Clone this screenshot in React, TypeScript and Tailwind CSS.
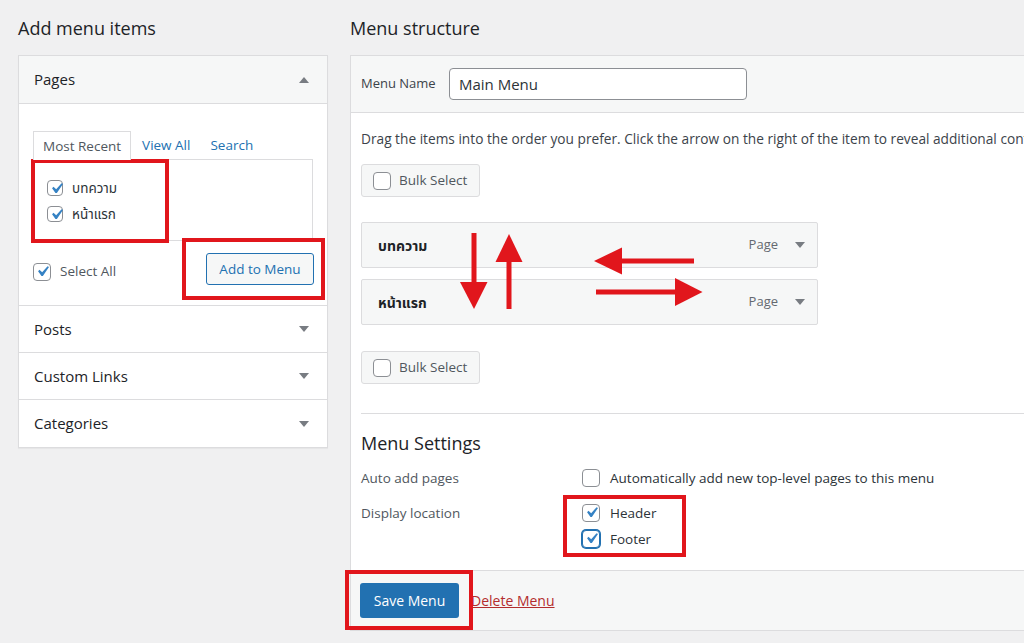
import type { ReactNode } from 'react';

const FONT = "font-['Open_Sans','Noto_Sans_Thai','Noto_Sans',sans-serif]";

function Check({ checked, focus, size = 'sm' }: { checked?: boolean; focus?: boolean; size?: 'sm' | 'lg' }) {
  return (
    <span
      className={`relative flex shrink-0 items-center justify-center rounded-[4px] border bg-white ${
        size === 'lg' ? 'h-[18px] w-[18px]' : 'h-4 w-4'
      } ${focus ? 'border-[#2271b1] ring-1 ring-[#2271b1]' : 'border-[#8c8f94]'}`}
    >
      {checked && (
        <svg viewBox="0 0 20 20" className="absolute -top-[3px] left-[-2px] h-[21px] w-[21px]">
          <path d="M14.83 4.89l1.34.94-5.81 8.38H9.02L5.78 9.67l1.34-1.25 2.57 2.4z" fill="#3582c4" />
        </svg>
      )}
    </span>
  );
}

function Caret({ up }: { up?: boolean }) {
  return (
    <svg viewBox="0 0 10 6" className="h-[6px] w-[10px]">
      <polygon points={up ? '5,0 10,6 0,6' : '0,0 10,0 5,6'} fill="#787c82" />
    </svg>
  );
}

function AccordionRow({ title, last }: { title: string; last?: boolean }) {
  return (
    <div className={`flex h-[47px] items-center justify-between pl-[15px] pr-[18px] ${last ? '' : 'border-b border-[#dcdcde]'}`}>
      <span className="text-[15px] font-medium text-[#1d2327]">{title}</span>
      <Caret />
    </div>
  );
}

function BulkSelect() {
  return (
    <div className="flex h-[33px] w-[119px] items-center gap-[8px] rounded-[3px] border border-[#dcdcde] bg-[#f6f7f7] pl-[11px]">
      <Check size="lg" />
      <span className="text-[13.5px] text-[#50575e]">Bulk Select</span>
    </div>
  );
}

function MenuItem({ title }: { title: string }) {
  return (
    <div className="flex h-[46px] w-[457px] items-center rounded-[2px] border border-[#dcdcde] bg-[#f6f7f7] pl-[16px] pr-[12px]">
      <span className="flex-1 text-[14px] font-bold text-[#1d2327]">{title}</span>
      <span className="mr-[17px] text-[13px] text-[#646970]">Page</span>
      <Caret />
    </div>
  );
}

function RedBox({ className }: { className: string }) {
  return <div className={`pointer-events-none absolute border-4 border-[#e1161c] ${className}`} />;
}

function Field({ label, children }: { label: string; children: ReactNode }) {
  return (
    <div className="flex">
      <div className="w-[221px] text-[13.5px] text-[#50575e]">{label}</div>
      <div>{children}</div>
    </div>
  );
}

export default function App() {
  return (
    <div className={`relative flex h-[643px] w-[1024px] overflow-hidden bg-[#f0f0f1] pl-[18px] pt-[16px] ${FONT}`}>
      {/* left column */}
      <div className="w-[310px] shrink-0">
        <h2 className="mb-[15px] h-[24px] text-[18px] leading-[24px] font-medium text-[#1d2327]">Add menu items</h2>
        <div className="border border-[#dcdcde] bg-white shadow-[0_1px_1px_rgba(0,0,0,0.04)]">
          <div className="flex h-[48px] items-center justify-between border-b border-[#dcdcde] bg-[#f6f7f7] pl-[15px] pr-[18px]">
            <span className="text-[15px] font-medium text-[#1d2327]">Pages</span>
            <Caret up />
          </div>
          <div className="h-[202px] border-b border-[#dcdcde] px-[14px] pt-[27px]">
            <div className="flex h-[28px] items-center text-[13.5px]">
              <div className="relative z-10 -mb-px flex h-[29px] items-center border border-b-0 border-[#dcdcde] bg-white px-[9px] text-[#50575e]">
                Most Recent
              </div>
              <span className="ml-[11px] text-[#2271b1]">View All</span>
              <span className="ml-[20px] text-[#2271b1]">Search</span>
            </div>
            <div className="h-[82px] w-[280px] border border-[#dcdcde] pl-[13px] pt-[19px]">
              <div className="flex h-[18px] items-center gap-[9px] text-[13.5px] text-[#2c3338]">
                <Check checked />
                <span>บทความ</span>
              </div>
              <div className="mt-[8px] flex h-[18px] items-center gap-[9px] text-[13.5px] text-[#2c3338]">
                <Check checked />
                <span>หน้าแรก</span>
              </div>
            </div>
            <div className="mt-[12px] flex w-[281px] items-center justify-between">
              <div className="mt-[5px] flex items-center gap-[9px]">
                <Check checked size="lg" />
                <span className="text-[13.5px] text-[#50575e]">Select All</span>
              </div>
              <button className="h-[32px] w-[108px] rounded-[3px] border border-[#2271b1] bg-[#f6f7f7] text-[13.5px] text-[#2271b1]">
                Add to Menu
              </button>
            </div>
          </div>
          <AccordionRow title="Posts" />
          <AccordionRow title="Custom Links" />
          <AccordionRow title="Categories" last />
        </div>
      </div>

      {/* right column */}
      <div className="ml-[22px] w-[720px] shrink-0">
        <h2 className="mb-[15px] h-[24px] text-[18px] leading-[24px] font-medium text-[#1d2327]">Menu structure</h2>
        <div className="flex h-[576px] flex-col border border-[#dcdcde] bg-white">
          <div className="flex h-[57px] items-center border-b border-[#dcdcde] bg-[#f6f7f7] px-[10px]">
            <span className="w-[88px] text-[13px] text-[#3c434a]">Menu Name</span>
            <div className="flex h-[32px] w-[298px] items-center rounded-[4px] border border-[#8c8f94] bg-white px-[9px] text-[15px] text-[#2c3338]">
              Main Menu
            </div>
          </div>
          <div className="flex-1 overflow-hidden px-[10px]">
            <p className="mt-[16px] h-[20px] whitespace-nowrap text-[13.7px] leading-[20px] text-[#3c434a]">
              Drag the items into the order you prefer. Click the arrow on the right of the item to reveal additional configuration options.
            </p>
            <div className="mt-[15px]">
              <BulkSelect />
            </div>
            <div className="mt-[25px] flex flex-col gap-[11px]">
              <MenuItem title="บทความ" />
              <MenuItem title="หน้าแรก" />
            </div>
            <div className="mt-[26px]">
              <BulkSelect />
            </div>
            <div className="mt-[29px] border-t border-[#dcdcde]" />
            <h3 className="mt-[16px] h-[26px] text-[18px] leading-[26px] font-medium text-[#1d2327]">Menu Settings</h3>
            <div className="mt-[12px] flex flex-col gap-[15px]">
              <Field label="Auto add pages">
                <div className="flex items-center gap-[10px]">
                  <Check size="lg" />
                  <span className="text-[13.5px] text-[#2c3338]">Automatically add new top-level pages to this menu</span>
                </div>
              </Field>
              <Field label="Display location">
                <div className="flex flex-col gap-[5px]">
                  <div className="flex items-center gap-[10px]">
                    <Check checked size="lg" />
                    <span className="text-[13.5px] text-[#2c3338]">Header</span>
                  </div>
                  <div className="flex items-center gap-[10px]">
                    <Check checked focus size="lg" />
                    <span className="text-[13.5px] text-[#2c3338]">Footer</span>
                  </div>
                </div>
              </Field>
            </div>
          </div>
          <div className="flex h-[60px] items-center gap-[12px] border-t border-[#dcdcde] bg-[#f6f7f7] px-[9px]">
            <button className="h-[35px] w-[99px] rounded-[3px] bg-[#2271b1] text-[14px] text-white">Save Menu</button>
            <span className="text-[14px] text-[#b32d2e] underline">Delete Menu</span>
          </div>
        </div>
      </div>

      {/* annotations */}
      <RedBox className="left-[31px] top-[159px] h-[84px] w-[138px]" />
      <RedBox className="left-[182px] top-[238px] h-[62px] w-[143px]" />
      <RedBox className="left-[563px] top-[495px] h-[62px] w-[123px]" />
      <RedBox className="left-[345px] top-[570px] h-[60px] w-[128px]" />
      <svg viewBox="0 0 1024 643" className="pointer-events-none absolute left-0 top-0 h-[643px] w-[1024px]">
        <g fill="#e1161c">
          <rect x="471.5" y="233" width="5" height="50" />
          <polygon points="460,282 487.5,282 474,309" />
          <polygon points="509,234 495.5,262 522.5,262" />
          <rect x="506.5" y="261" width="5" height="48" />
          <polygon points="594,261 622,247.5 622,274.5" />
          <rect x="621" y="258.5" width="73" height="5" />
          <rect x="596" y="289.5" width="80" height="5" />
          <polygon points="702.5,292 675,278 675,306" />
        </g>
      </svg>
    </div>
  );
}
